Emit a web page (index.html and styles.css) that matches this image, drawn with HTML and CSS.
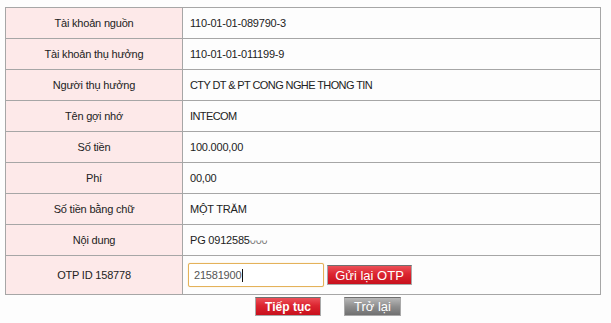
FILE: index.html
```html
<!DOCTYPE html>
<html>
<head>
<meta charset="utf-8">
<link rel="stylesheet" href="styles.css">
</head>
<body>
<div class="page">
  <table class="info">
    <tr><td class="label">Tài khoản nguồn</td><td class="value">110-01-01-089790-3</td></tr>
    <tr><td class="label">Tài khoản thụ hưởng</td><td class="value">110-01-01-011199-9</td></tr>
    <tr><td class="label">Người thụ hưởng</td><td class="value caps">CTY DT &amp; PT CONG NGHE THONG TIN</td></tr>
    <tr><td class="label">Tên gợi nhớ</td><td class="value caps">INTECOM</td></tr>
    <tr><td class="label">Số tiền</td><td class="value">100.000,00</td></tr>
    <tr><td class="label">Phí</td><td class="value">00,00</td></tr>
    <tr><td class="label">Số tiền bằng chữ</td><td class="value">MỘT TRĂM</td></tr>
    <tr><td class="label">Nội dung</td><td class="value">PG 0912585<span class="masked">000</span></td></tr>
    <tr class="otp-row"><td class="label">OTP ID 158778</td><td class="value otp-cell"><div class="otp"><div class="otp-input">21581900<span class="caret"></span></div><button class="btn btn-red btn-resend">Gửi lại OTP</button></div></td></tr>
  </table>
  <div class="actions">
    <button class="btn btn-red btn-next">Tiếp tục</button>
    <button class="btn btn-gray btn-back">Trở lại</button>
  </div>
</div>
</body>
</html>
```
FILE: styles.css
```css
html, body {
  margin: 0;
  padding: 0;
  background: #fdfdfd;
}
.page {
  padding: 7px 0 0 5px;
  font-family: "Liberation Sans", Arial, sans-serif;
  font-size: 11px;
  color: #222;
}
.info {
  border-collapse: collapse;
  width: 596px;
}
.info td {
  border: 1px solid #a6a6a6;
  height: 30px;
  padding: 0;
  box-sizing: border-box;
  vertical-align: middle;
}
.info tr { height: 31px; }
.info .label {
  width: 177px;
  background: #fde9e9;
  text-align: center;
  letter-spacing: -0.2px;
}
.info .value {
  padding-left: 7px;
  background: #fdfdfd;
  letter-spacing: -0.2px;
}
.info .caps {
  letter-spacing: -0.6px;
}
.masked {
  color: #777;
  clip-path: inset(55% 0 0 0);
}
.info .otp-row { height: 39px; }
.info .otp-row td { height: 39px; }
.info .otp-cell { padding-left: 5px; }
.otp {
  display: flex;
  align-items: center;
  gap: 3px;
}
.otp-input {
  box-sizing: border-box;
  display: flex;
  align-items: center;
  width: 136px;
  height: 24px;
  border: 1px solid #e4b25a;
  border-radius: 2px;
  box-shadow: 0 0 1px #f0c878;
  padding: 0 0 0 5px;
  font-size: 11px;
  color: #555;
  background: #fff;
}
.caret {
  display: inline-block;
  width: 1px;
  height: 13px;
  margin-left: 1px;
  background: #111;
}
.btn {
  box-sizing: border-box;
  margin: 0;
  padding: 0;
  color: #fff;
  font-family: "Liberation Sans", Arial, sans-serif;
  font-weight: bold;
  font-size: 12px;
  border: 1px solid #a9a9a9;
  border-top-color: #6f6f6f;
  cursor: pointer;
}
.btn-red {
  background: linear-gradient(#ec5058 0%, #dc2530 45%, #c8101c 100%);
}
.btn-gray {
  background: linear-gradient(#b8b8b8 0%, #8e8e8e 50%, #707070 100%);
}
.btn-resend {
  width: 85px;
  height: 20px;
  font-size: 13px;
  font-weight: normal;
}
.actions {
  display: flex;
  gap: 23px;
  padding: 2px 0 0 250px;
}
.btn-next {
  width: 66px;
  height: 19px;
}
.btn-back {
  width: 57px;
  height: 19px;
  font-weight: normal;
  font-size: 13px;
}
```
